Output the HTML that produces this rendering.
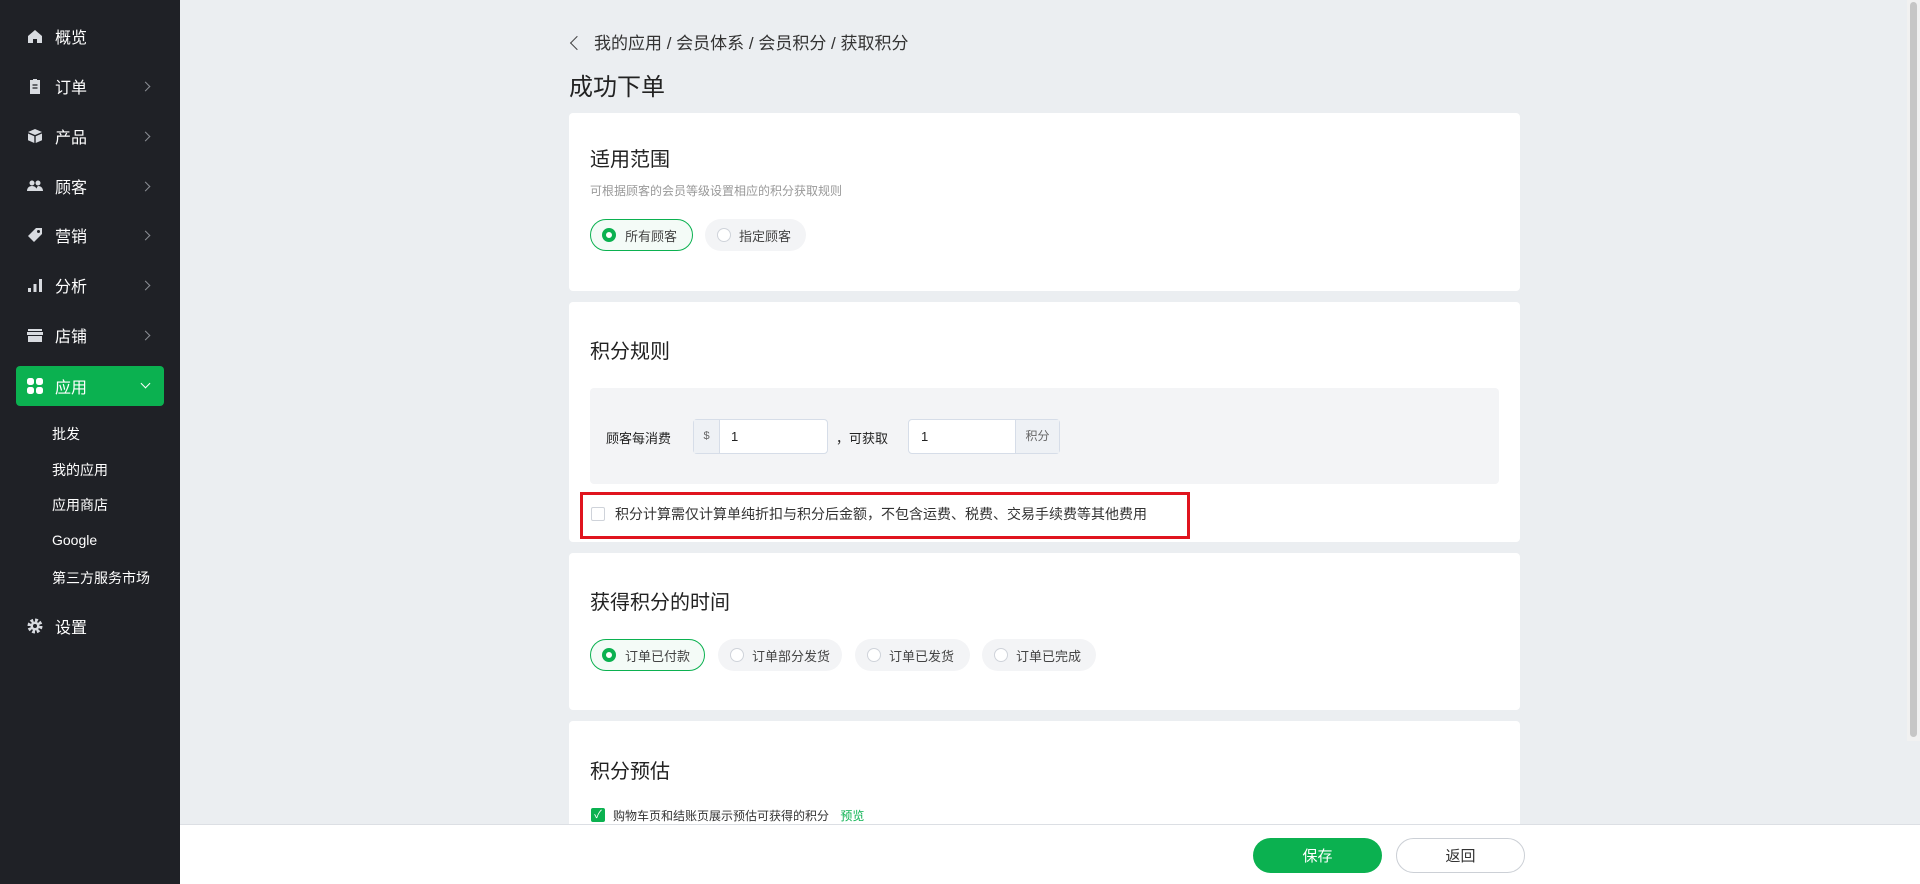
<!DOCTYPE html>
<html><head><meta charset="utf-8">
<style>
*{box-sizing:border-box;margin:0;padding:0}
body{width:1920px;height:884px;overflow:hidden;background:#ebeef1;font-family:"Liberation Sans","Noto Sans CJK SC",sans-serif;color:#222;position:relative}
.side{position:absolute;left:0;top:0;width:180px;height:884px;background:#1f2126;color:#fff}
.mi{position:absolute;left:0;width:180px;height:40px;font-size:16px;display:flex;align-items:center}
.mi .ic{position:absolute;left:27px;width:16px;height:16px}
.mi .tx{position:absolute;left:55px}
.mi .ch{position:absolute;left:142px;width:7px;height:7px;border-right:1.5px solid #8a8d93;border-top:1.5px solid #8a8d93;transform:rotate(45deg)}
.act{left:16px;width:148px;background:#0bb150;border-radius:4px}
.act .ic{left:11px}.act .tx{left:39px}
.sub{position:absolute;left:52px;font-size:14px;color:#fff}
.card{position:absolute;left:569px;width:951px;background:#fff;border-radius:4px}
.h{position:absolute;left:21px;font-size:20px;color:#222}
.pill{position:absolute;height:32px;border-radius:16px;background:#f3f4f6;font-size:13px;color:#444;display:flex;align-items:center;padding-left:34px}
.pill .r{position:absolute;left:12px;top:9px;width:14px;height:14px;border-radius:50%;border:1px solid #cfd3da;background:#fff}
.pill.on{background:#f4fbf7;border:1.5px solid #0bb150}
.pill.on .r{border:4px solid #0bb150;left:10.5px;top:7.5px}
.inp{position:absolute;top:31px;height:35px;border:1px solid #d6dde8;border-radius:4px;background:#fff;font-size:13px}
.btn{position:absolute;top:838px;height:35px;width:129px;border-radius:18px;font-size:15px;display:flex;align-items:center;justify-content:center}
</style></head><body>
<div class="side">
 <div class="mi" style="top:16px"><svg class="ic" viewBox="0 0 16 16"><path d="M1 8L8 2l7 6v7h-5v-4H6v4H1z" fill="#d8dbe0"/></svg><span class="tx">概览</span></div>
 <div class="mi" style="top:66px"><svg class="ic" viewBox="0 0 16 16"><path d="M3 2h3V1h4v1h3v14H3z" fill="#d8dbe0"/><path d="M5.5 7h5M5.5 10h5" stroke="#1f2126" stroke-width="1.3"/></svg><span class="tx">订单</span><span class="ch"></span></div>
 <div class="mi" style="top:116px"><svg class="ic" viewBox="0 0 16 16"><path d="M8 1l7 3-7 3-7-3z" fill="#d8dbe0"/><path d="M1 5.5l6.3 2.7V15L1 12.3zM15 5.5L8.7 8.2V15l6.3-2.7z" fill="#d8dbe0"/></svg><span class="tx">产品</span><span class="ch"></span></div>
 <div class="mi" style="top:166px"><svg class="ic" viewBox="0 0 16 16"><circle cx="5" cy="5" r="2.5" fill="#d8dbe0"/><circle cx="11" cy="5" r="2.5" fill="#d8dbe0"/><path d="M0 13c0-3 2-5 5-5s5 2 5 5zM9 13c0-2 1-4 2-5 3 0 5 2 5 5z" fill="#d8dbe0"/></svg><span class="tx">顾客</span><span class="ch"></span></div>
 <div class="mi" style="top:215px"><svg class="ic" viewBox="0 0 16 16"><path d="M1 9L9 1h6v6l-8 8z" fill="#d8dbe0"/><circle cx="11.5" cy="4.5" r="1.5" fill="#1f2126"/></svg><span class="tx">营销</span><span class="ch"></span></div>
 <div class="mi" style="top:265px"><svg class="ic" viewBox="0 0 16 16"><rect x="1" y="11" width="3" height="4" fill="#d8dbe0"/><rect x="6.5" y="7" width="3" height="8" fill="#d8dbe0"/><rect x="12" y="2" width="3" height="13" fill="#d8dbe0"/></svg><span class="tx">分析</span><span class="ch"></span></div>
 <div class="mi" style="top:315px"><svg class="ic" viewBox="0 0 16 16"><rect x="1" y="2" width="14" height="2" fill="#d8dbe0"/><rect x="0" y="5" width="16" height="3" fill="#d8dbe0"/><rect x="1" y="9" width="14" height="6" fill="#d8dbe0"/></svg><span class="tx">店铺</span><span class="ch"></span></div>
 <div class="mi act" style="top:366px"><svg class="ic" viewBox="0 0 16 16"><rect x="0" y="0" width="7" height="7" rx="2.5" fill="#fff"/><rect x="9" y="0" width="7" height="7" rx="2.5" fill="#fff"/><rect x="0" y="9" width="7" height="7" rx="2.5" fill="#fff"/><rect x="9" y="9" width="7" height="7" rx="2.5" fill="#fff"/></svg><span class="tx">应用</span><span class="ch" style="left:126px;top:14px;transform:rotate(135deg);border-color:#fff"></span></div>
 <div class="sub" style="top:424px">批发</div>
 <div class="sub" style="top:460px">我的应用</div>
 <div class="sub" style="top:495px">应用商店</div>
 <div class="sub" style="top:532px">Google</div>
 <div class="sub" style="top:568px">第三方服务市场</div>
 <div class="mi" style="top:606px"><svg class="ic" viewBox="0 0 16 16"><circle cx="8" cy="8" r="5.5" fill="none" stroke="#d8dbe0" stroke-width="4" stroke-dasharray="2.6 1.7"/><circle cx="8" cy="8" r="4.5" fill="#d8dbe0"/><circle cx="8" cy="8" r="2" fill="#1f2126"/></svg><span class="tx">设置</span></div>
</div>

<div style="position:absolute;left:572px;top:29px;font-size:17px;color:#333"><span style="display:inline-block;width:10px;height:10px;border-left:1.5px solid #444;border-bottom:1.5px solid #444;transform:rotate(45deg);margin-right:12px;vertical-align:1px"></span>我的应用 / 会员体系 / 会员积分 / 获取积分</div>
<div style="position:absolute;left:569px;top:67px;font-size:24px;color:#222">成功下单</div>

<div class="card" style="top:113px;height:178px">
 <div class="h" style="top:30px">适用范围</div>
 <div style="position:absolute;left:21px;top:69px;font-size:12px;color:#999">可根据顾客的会员等级设置相应的积分获取规则</div>
 <div class="pill on" style="left:21px;top:106px;width:103px"><span class="r"></span>所有顾客</div>
 <div class="pill" style="left:136px;top:106px;width:101px"><span class="r"></span>指定顾客</div>
</div>

<div class="card" style="top:302px;height:240px">
 <div class="h" style="top:33px">积分规则</div>
 <div style="position:absolute;left:21px;top:86px;width:909px;height:96px;background:#f3f4f6;border-radius:4px">
  <div style="position:absolute;left:16px;top:40px;font-size:13px">顾客每消费</div>
  <div class="inp" style="left:103px;width:135px"><div style="position:absolute;left:0;top:0;width:26px;height:33px;background:#eef1f5;border-right:1px solid #d6dde8;color:#666;text-align:center;line-height:33px;font-size:11px">$</div><span style="position:absolute;left:37px;top:9px">1</span></div>
  <div style="position:absolute;left:246px;top:40px;font-size:13px">，可获取</div>
  <div class="inp" style="left:318px;width:152px"><span style="position:absolute;left:12px;top:9px">1</span><div style="position:absolute;right:0;top:0;width:44px;height:33px;background:#eef1f5;border-left:1px solid #d6dde8;color:#666;text-align:center;line-height:33px;font-size:12px">积分</div></div>
 </div>
 <div style="position:absolute;left:22px;width:14px;height:14px;border:1px solid #cfd3da;border-radius:2px;top:205px"></div>
 <div style="position:absolute;left:46px;top:202px;font-size:14px;color:#333">积分计算需仅计算单纯折扣与积分后金额，不包含运费、税费、交易手续费等其他费用</div>
</div>
<div style="position:absolute;left:580px;top:492px;width:610px;height:47px;border:3px solid #e0141e"></div>

<div class="card" style="top:553px;height:157px">
 <div class="h" style="top:33px">获得积分的时间</div>
 <div class="pill on" style="left:21px;top:86px;width:115px"><span class="r"></span>订单已付款</div>
 <div class="pill" style="left:149px;top:86px;width:124px"><span class="r"></span>订单部分发货</div>
 <div class="pill" style="left:286px;top:86px;width:115px"><span class="r"></span>订单已发货</div>
 <div class="pill" style="left:413px;top:86px;width:114px"><span class="r"></span>订单已完成</div>
</div>

<div class="card" style="top:721px;height:120px">
 <div class="h" style="top:34px">积分预估</div>
 <div style="position:absolute;left:22px;top:87px;width:14px;height:14px;background:#0bb150;border-radius:2px;color:#fff;font-size:11px;line-height:14px;text-align:center">✓</div>
 <div style="position:absolute;left:44px;top:86px;font-size:12px;color:#333">购物车页和结账页展示预估可获得的积分 <span style="color:#0bb150;margin-left:8px">预览</span></div>
</div>

<div style="position:absolute;left:180px;top:824px;width:1740px;height:60px;background:#fff;border-top:1px solid #dcdfe4"></div>
<div class="btn" style="left:1253px;background:#0bb150;color:#fff">保存</div>
<div class="btn" style="left:1396px;background:#fff;border:1px solid #ccd0d6;color:#333">返回</div>
<div style="position:absolute;left:1907px;top:0;width:13px;height:741px;background:#f1f1f1"><div style="margin:2px 3px;height:735px;background:#c6c6c6;border-radius:4px"></div></div>
</body></html>
